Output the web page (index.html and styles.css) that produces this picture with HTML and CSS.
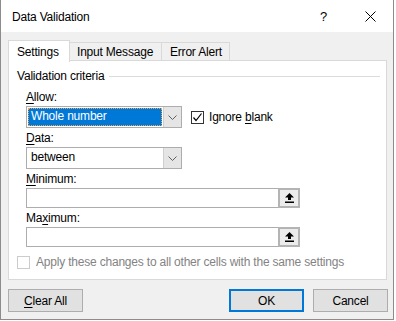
FILE: index.html
```html
<!DOCTYPE html>
<html>
<head>
<meta charset="utf-8">
<link rel="stylesheet" href="styles.css">
</head>
<body>
<div class="window">
  <div class="titlebar">
    <span class="title">Data Validation</span>
    <span class="help">?</span>
    <svg class="close" width="11" height="11" viewBox="0 0 11 11"><path d="M0.5 0.5 L10.5 10.5 M10.5 0.5 L0.5 10.5" stroke="#000" stroke-width="1" fill="none"/></svg>
  </div>
  <div class="body">
    <div class="tabs">
      <div class="tab tab-settings active">Settings</div>
      <div class="tab tab-input">Input Message</div>
      <div class="tab tab-error">Error Alert</div>
    </div>
    <div class="panel">
      <div class="group-head">
        <span>Validation criteria</span>
        <span class="group-line"></span>
      </div>
      <div class="form">
        <div class="label"><u>A</u>llow:</div>
        <div class="row">
          <div class="combo">
            <div class="combo-value selected"><span>Whole number</span></div>
            <div class="combo-btn"><svg width="9" height="5" viewBox="0 0 9 5"><path d="M0.5 0.5 L4.5 4.5 L8.5 0.5" stroke="#606060" stroke-width="1" fill="none"/></svg></div>
          </div>
          <div class="check">
            <span class="box"><svg width="11" height="11" viewBox="0 0 11 11"><path d="M1.5 5.5 L4 8.5 L9.5 1.5" stroke="#000" stroke-width="1.2" fill="none"/></svg></span>
            <span>Ignore <u>b</u>lank</span>
          </div>
        </div>
        <div class="label"><u>D</u>ata:</div>
        <div class="combo">
          <div class="combo-value"><span>between</span></div>
          <div class="combo-btn"><svg width="9" height="5" viewBox="0 0 9 5"><path d="M0.5 0.5 L4.5 4.5 L8.5 0.5" stroke="#606060" stroke-width="1" fill="none"/></svg></div>
        </div>
        <div class="label"><u>M</u>inimum:</div>
        <div class="ref-input">
          <div class="ref-field"></div>
          <div class="ref-btn"><svg width="9" height="10" viewBox="0 0 9 10"><path d="M4.5 0 L9 4.5 L6 4.5 L6 7 L3 7 L3 4.5 L0 4.5 Z" fill="#000"/><rect x="0" y="8.5" width="9" height="1.5" fill="#000"/></svg></div>
        </div>
        <div class="label">Ma<u>x</u>imum:</div>
        <div class="ref-input">
          <div class="ref-field"></div>
          <div class="ref-btn"><svg width="9" height="10" viewBox="0 0 9 10"><path d="M4.5 0 L9 4.5 L6 4.5 L6 7 L3 7 L3 4.5 L0 4.5 Z" fill="#000"/><rect x="0" y="8.5" width="9" height="1.5" fill="#000"/></svg></div>
        </div>
      </div>
      <div class="check apply disabled">
        <span class="box"></span>
        <span>Apply these changes to all other cells with the same settings</span>
      </div>
    </div>
    <div class="buttons">
      <div class="btn"><u>C</u>lear All</div>
      <div class="spacer"></div>
      <div class="btn default">OK</div>
      <div class="btn">Cancel</div>
    </div>
  </div>
</div>
</body>
</html>
```
FILE: styles.css
```css
* { box-sizing: border-box; }
html, body { margin: 0; padding: 0; background: #fff; }
body {
  font-family: "Liberation Sans", Arial, sans-serif;
  font-size: 12px;
  letter-spacing: -0.2px;
  color: #000;
  width: 396px;
  height: 321px;
}
u { text-decoration: underline; text-underline-offset: 2px; }

.window {
  width: 394px;
  height: 320px;
  border: 1px solid #8c8c8c;
  border-top: none;
  background: #f0f0f0;
  display: flex;
  flex-direction: column;
}

.titlebar {
  height: 32px;
  background: #fff;
  display: flex;
  align-items: center;
  padding: 1px 0 0 11px;
  font-size: 12px;
}
.title { flex: 1; }
.help { font-size: 13px; margin-right: 38px; }
.close { margin-right: 17px; }

.body { padding: 8px 0 0 7px; }

.tabs {
  display: flex;
  align-items: flex-start;
  height: 22px;
  position: relative;
  z-index: 1;
}
.tab {
  height: 18px;
  margin-top: 2px;
  border: 1px solid #d9d9d9;
  border-bottom: none;
  border-left: none;
  line-height: 16px;
  padding-top: 1px;
  background: #f0f0f0;
  white-space: nowrap;
}
.tab.active {
  height: 22px;
  margin-top: 0;
  padding-top: 3px;
  background: #fff;
  border-left: 1px solid #d9d9d9;
}
.tab-settings { width: 62px; padding-left: 8px; }
.tab-input { width: 92px; padding-left: 7px; }
.tab-error { width: 68px; padding-left: 8px; }

.panel {
  margin-top: -2px;
  width: 379px;
  height: 220px;
  border: 1px solid #d9d9d9;
  background: #fff;
  padding: 7px 0 0 8px;
}

.group-head {
  display: flex;
  align-items: center;
  height: 16px;
  line-height: 16px;
}
.group-line {
  flex: 1;
  height: 1px;
  background: #dcdcdc;
  margin: 0 6px 0 5px;
}

.form { padding-left: 9px; }
.label { height: 16px; line-height: 16px; margin-top: 2px; }
.form > .label:first-child { margin-top: 5px; }

.row { display: flex; align-items: center; }

.combo {
  margin-top: 1px;
  width: 156px;
  height: 22px;
  border: 1px solid #adadad;
  display: flex;
  background: #fff;
}
.combo-value {
  flex: 1;
  padding: 1px;
}
.combo-value span {
  display: block;
  height: 100%;
  line-height: 16px;
  padding-left: 3px;
}
.combo-value.selected span {
  background: #0078d7;
  color: #fff;
  border: 1px dotted #f5a04a;
  padding-left: 2px;
  line-height: 14px;
}
.combo-btn {
  width: 18px;
  background: #e5e5e5;
  border-left: 1px solid #cfcfcf;
  display: flex;
  align-items: center;
  justify-content: center;
}

.check {
  display: flex;
  align-items: center;
  height: 16px;
  line-height: 16px;
}
.row .check { margin-left: 9px; margin-top: 1px; }
.box {
  width: 13px;
  height: 13px;
  border: 1px solid #333;
  background: #fff;
  margin-right: 5px;
  display: flex;
  align-items: center;
  justify-content: center;
}
.apply { margin-top: 7px; }
.disabled { color: #838383; }
.disabled .box { border-color: #cccccc; margin-right: 6px; }

.ref-input {
  margin-top: 1px;
  width: 274px;
  height: 20px;
  display: flex;
  border: 1px solid #adadad;
  background: #fff;
}
.ref-field { flex: 1; }
.ref-btn {
  width: 22px;
  margin: -1px -1px -1px 0;
  border: 2px solid #b4b4b4;
  background: #ececec;
  display: flex;
  align-items: center;
  justify-content: center;
}

.buttons {
  display: flex;
  margin-top: 9px;
  width: 380px;
  gap: 9px;
}
.spacer { flex: 1; }
.btn {
  width: 75px;
  height: 23px;
  border: 1px solid #adadad;
  background: #e1e1e1;
  display: flex;
  align-items: center;
  justify-content: center;
}
.btn.default { border: 2px solid #0078d7; }
```
